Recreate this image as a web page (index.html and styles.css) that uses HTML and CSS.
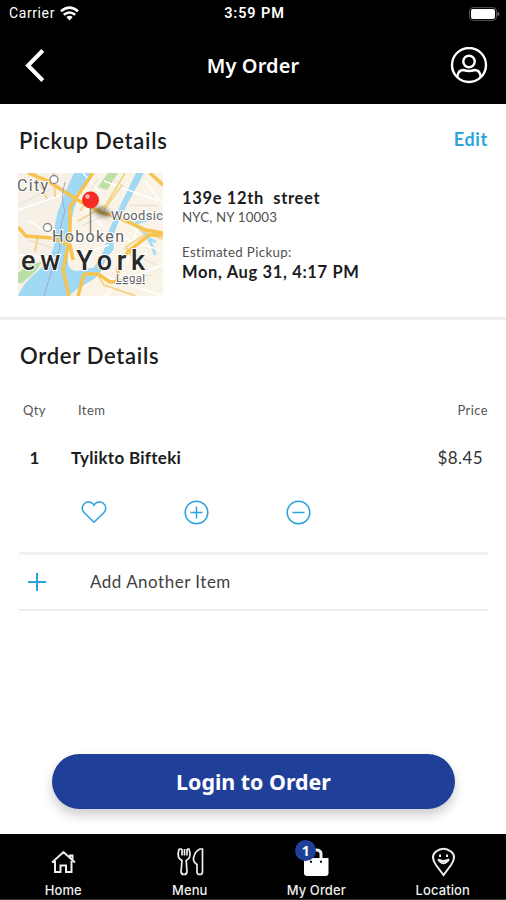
FILE: index.html
```html
<!DOCTYPE html>
<html lang="en">
<head>
<meta charset="utf-8">
<title>My Order</title>
<link rel="stylesheet" href="styles.css">
</head>
<body>
<div class="app">
  <header class="top">
    <div class="status">
      <div class="carrier"><span>Carrier</span>
        <svg width="19" height="15" viewBox="0 0 19 15" fill="none" stroke="#fff" stroke-width="2.600"><path d="M1 5.200Q9.500-1.800 18 5.200M3.800 8.800Q9.500 4.200 15.200 8.800"/><path d="M6.300 11Q9.500 8.400 12.700 11L9.500 14.400Z" fill="#fff" stroke="none"/></svg>
      </div>
      <span class="clock">3:59 PM</span>
      <svg class="battery" width="32" height="14" viewBox="0 0 32 14"><rect x="1.500" y=".6" width="27" height="12.800" rx="3.500" fill="none" stroke="#555"/><rect x="3" y="2" width="24" height="10" rx="2" fill="#fff"/><path d="M29.500 4.800Q31.500 5.500 31.500 7T29.500 9.200Z" fill="#777"/></svg>
    </div>
    <div class="nav">
      <svg width="22" height="34" viewBox="0 0 22 34" fill="none" stroke="#fff" stroke-width="4"><path d="M19.800 1.500L5 16.500L19.800 31.500"/></svg>
      <h1>My Order</h1>
      <svg width="38" height="38" viewBox="0 0 38 38" fill="none" stroke="#fff" stroke-width="2.400"><circle cx="19" cy="18" r="17"/><circle cx="19" cy="14.500" r="5.700"/><path d="M7.500 30V28.500Q8.500 23 13.500 23Q19 25 24.500 23Q29.500 23 30.500 28.500V30"/></svg>
    </div>
  </header>

  <section class="pickup">
    <div class="heading"><h2>Pickup Details</h2><a class="edit">Edit</a></div>
    <div class="pickup-body">
      <svg class="map" width="145" height="123" viewBox="0 0 145 123">
        <defs><filter id="soft" x="-50%" y="-50%" width="200%" height="200%"><feGaussianBlur stdDeviation="2.500"/></filter></defs>
        <rect width="145" height="123" fill="#f6f0e6"/>
        <path d="M52 0H145V123H62L50 90L51 34Z" fill="#faf4e8"/>
        <path d="M90 0H100L89 17L80 14Z" fill="#bddfa5"/>
        <path d="M0 100L12 91L24 89L18 98L4 110L0 110Z" fill="#b9dfa8"/>
        <path d="M56 0H74Q60 21 56 36Q51 54 50 83Q48 99 60 98L78 94Q85 99 76 106L59 116L51 123H0Q4 111 20 98Q35 85 37 67Q35 51 42 33Q49 14 56 0Z" fill="#9fd9f3"/>
        <path d="M118 0H126L112 26L100 50L95 64L96 76L88 86L82 100L74 98L86 77L91 57L101 35Z" fill="#9fd9f3"/>
        <path d="M99 42Q121 52 128 62T137 82M117 50L145 43M128 64L138 69" fill="none" stroke="#a9dcf3" stroke-width="3"/>
        <g fill="none" stroke="#fff" stroke-width="1.500"><path d="M0 37L43 22M0 82L38 85M10 47L37 65M57 67L82 58M60 82L91 72M69 42L85 53M86 8L140 28M101 64L145 78M119 56L109 90M80 101L145 123M106 100L88 123M127 8L145 32M145 92L112 105M65 0L83 21"/></g>
        <g fill="none" stroke="#e8ddd0" stroke-width="1"><path d="M0 32L38 14M10 67L34 75M65 52L84 44M67 65L84 67M60 87L73 78M80 5L74 15M93 5L107 14M111 32L140 33M104 75L138 92M95 108L135 102"/></g>
        <g fill="none" stroke="#f3d58b" stroke-width="2"><path d="M17 0L29 26M36 0L37 24M60 48L88 32L107 0M62 38L75 18M104 12L86 37M122 57L145 66M126 62L108 74L119 92M79 101L86 112L118 123M20 63L17 79"/></g>
        <g fill="none" stroke="#f6c34f" stroke-width="3.500"><path d="M10 0L30 8L58 26L82 39L99 44L128 57L145 60M75 0L60 22L52 34L52 61L48 84L45 97L51 123M0 54L8 63L34 65L52 72L55 87M145 62L131 62L113 76L101 89L99 108M66 101H80L92 109L110 108M66 101L60 123M132 0L145 12"/></g>
        <path d="M47 9Q42 27 47 38Q39 62 42 75Q35 93 26 123" fill="none" stroke="#a6a5cb" stroke-width="1"/>
        <g fill="#fff" stroke="#8a8a8a" stroke-width="1.300"><circle cx="36" cy="6.500" r="4"/><circle cx="29.500" cy="54.500" r="4"/></g>
        <g class="map-label">
          <text x="-1" y="18" font-size="16" textLength="31">City</text>
          <text x="93" y="47" font-size="13" textLength="52">Woodsic</text>
          <text x="34" y="69" font-size="16" textLength="72">Hoboken</text>
          <text class="legal" x="98" y="109" font-size="11.500" textLength="29">Legal</text>
        </g>
        <text class="map-city" x="3" y="97" font-size="27" textLength="124">ew York</text>
        <ellipse cx="84" cy="39" rx="9" ry="4" fill="#333" opacity=".6" filter="url(#soft)" transform="rotate(20 84 39)"/>
        <path d="M72.500 34V60" stroke="#888" stroke-width="1.500"/>
        <circle cx="72.500" cy="27" r="8.500" fill="#f52b24"/><circle cx="69.500" cy="23.500" r="2.300" fill="#ffb4ac"/>
      </svg>
      <div class="address">
        <strong class="street">139e 12th&nbsp; street</strong>
        <span class="city">NYC, NY 10003</span>
        <span class="estimate">Estimated Pickup:</span>
        <strong class="time">Mon, Aug 31, 4:17 PM</strong>
      </div>
    </div>
  </section>

  <section class="order">
    <h2>Order Details</h2>
    <div class="row labels"><span class="qty">Qty</span><span class="item">Item</span><span class="price">Price</span></div>
    <div class="row product"><span class="qty">1</span><span class="item">Tylikto Bifteki</span><span class="price">$8.45</span></div>
    <div class="actions">
      <svg width="26" height="26" viewBox="0 0 26 26"><path d="M13 23.200L3 13.500C-1.500 8 4 1.500 9.500 3.200Q12 4 13 6.200Q14 4 16.500 3.200C22 1.500 27.500 8 23 13.500Z"/></svg>
      <svg width="26" height="26" viewBox="0 0 26 26"><circle cx="13.500" cy="13.500" r="11.300"/><path d="M13.500 7.500V19.500M7.500 13.500H19.500"/></svg>
      <svg width="26" height="26" viewBox="0 0 26 26"><circle cx="13.500" cy="13.500" r="11.300"/><path d="M7.500 13.500H19.500"/></svg>
    </div>
    <div class="add">
      <svg width="20" height="20" viewBox="0 0 20 20"><path d="M10 1V19M1 10H19"/></svg>
      <span>Add Another Item</span>
    </div>
  </section>

  <button class="login"><span>Login to Order</span></button>

  <nav class="tabs">
    <a><svg width="30" height="32" viewBox="0 0 30 32"><path d="M4 16.500L15.500 6L27 16.500M7 15V26H12.500V19.500H18V26H23.500V15M22 11.500V9.500H24.500V13.500"/></svg><span>Home</span></a>
    <a><svg width="30" height="32" viewBox="0 0 30 32"><path d="M4 3Q2.500 8 3.500 11Q4.500 13 7 14.500L6 26Q6.500 28.500 9 28.500T12 26L11.200 14.500Q14 13 14.800 10.500Q15.500 7 14 3H12M7 3V9.500M9.500 3V9.500M12 3V9.500M4 3H7M27.500 3V26Q27.500 28.500 25 28.500Q22 28.500 22 26V18.500Q18 16 18.500 12Q20 5 25 3Z"/></svg><span>Menu</span></a>
    <a><span class="bag"><svg width="30" height="32" viewBox="0 0 30 32"><path class="solid" d="M3 12H27.500V27Q27.500 30 24.500 30H6Q3 30 3 27Z"/><path d="M10 13V8Q10 4 15 4T20 8V13" stroke-width="3"/><path class="dots" d="M10 15.500V16M20 15.500V16"/></svg><span class="badge">1</span></span><span>My Order</span></a>
    <a><svg width="30" height="32" viewBox="0 0 30 32"><path d="M15.500 29L8 19Q2 10.500 8 5.500Q15.500 0 23 5.500Q29 10.500 23 19ZM10 13.500Q15.500 21 21 13.500Q15.500 16.500 10 13.500"/><path d="M12 8.500V11M19 8.500V11"/></svg><span>Location</span></a>
  </nav>
</div>
</body>
</html>
```

FILE: styles.css
```css
* { box-sizing: border-box; }
body { margin: 0; background: #fff; font-family: Lato, "Noto Sans", sans-serif; color: #1b1c20; }
svg { display: block; flex: none; }
h1, h2 { margin: 0; }
.app { width: 506px; height: 900px; display: flex; flex-direction: column; overflow: hidden; }

.top { height: 104px; flex: none; background: #000; color: #fff; }
.status { height: 27px; padding: 0 6px 0 9px; display: grid; grid-template-columns: 1fr auto 1fr; align-items: center; font: 14px/27px Roboto, sans-serif; }
.carrier { display: flex; align-items: center; gap: 5px; letter-spacing: .6px; }
.clock { font-family: Roboto, sans-serif; font-weight: 600; font-size: 14.500px; letter-spacing: .9px; }
.battery { justify-self: end; }
.nav { height: 77px; padding: 0 18px 0 23px; display: grid; grid-template-columns: 1fr auto 1fr; align-items: center; }
.nav h1 { margin-right: 5px; font: 600 20px/28px "Noto Sans", sans-serif; letter-spacing: .1px; }
.nav svg:last-child { justify-self: end; }

.pickup { height: 216px; flex: none; padding: 22px 18px 0; border-bottom: 3px solid #eee; }
h2 { font: 600 22px/30px Lato, sans-serif; letter-spacing: .7px; }
.heading { height: 47px; display: flex; justify-content: space-between; padding-left: 1px; }
.edit { color: #2ba4da; font: 700 18px/26px Lato, sans-serif; letter-spacing: .7px; }
.pickup-body { display: flex; gap: 19px; }
.map text { font-family: Roboto, sans-serif; }
.map-label { fill: #626262; stroke: #fff; stroke-width: 2px; paint-order: stroke; }
.map-label .legal { text-decoration: underline; }
.map-city { fill: #292929; stroke: #fff; stroke-width: 2px; paint-order: stroke; font-weight: 500; }
.address { display: flex; flex-direction: column; padding-top: 15px; white-space: nowrap; }
.street, .time { font-size: 16.500px; line-height: 20px; font-weight: 700; letter-spacing: .65px; }
.city, .estimate { font-size: 13.300px; line-height: 18px; color: #505050; letter-spacing: .15px; }
.estimate { margin-top: 17px; letter-spacing: .35px; }
.time { margin-top: 1px; }

.order { padding: 21px 18px 0 19px; }
.order h2 { padding-left: 1px; }
.row { display: grid; grid-template-columns: 31px 1fr auto; }
.row .qty { text-align: center; }
.labels { margin-top: 29px; font-size: 13px; line-height: 20px; color: #555; letter-spacing: .4px; }
.labels .item { padding-left: 28px; }
.product { margin-top: 27px; font-size: 17px; line-height: 22px; font-weight: 700; }
.product .item { padding-left: 21px; letter-spacing: .3px; }
.product .price { padding-right: 5px; font-weight: 400; color: #333; letter-spacing: .4px; }
.actions { display: flex; gap: 76px; margin-top: 30px; padding-left: 62px; }
.actions svg, .add svg { fill: none; stroke: #29a2dd; stroke-width: 1.500; }
.add svg { stroke-width: 2; }
.add { height: 59px; display: flex; align-items: center; gap: 43px; margin-top: 27px; padding: 0 0 1px 8px; border-top: 3px solid #f2f2f2; border-bottom: 2px solid #ededed; font-size: 17px; color: #414141; letter-spacing: .5px; }

.login { width: 403px; height: 55px; flex: none; margin: auto auto 25px 52px; padding: 0; border: 0; border-radius: 28px; background: #203f99; color: #fff; box-shadow: 0 6px 12px #0003; font: 700 21.400px/55px "Noto Sans", sans-serif; }

.tabs { height: 66px; flex: none; background: #000; color: #eee; display: grid; grid-template-columns: repeat(4, 1fr); border-bottom: 1px solid #333; }
.tabs a { display: flex; flex-direction: column; align-items: center; padding-top: 12px; font: 500 13px/20px Inter, sans-serif; }
.tabs a > span:last-child { margin-top: 2px; white-space: nowrap; letter-spacing: .1px; }
.tabs svg { fill: none; stroke: #eee; stroke-width: 2; }
.tabs a:nth-child(2) svg { stroke-width: 1.700; }
.tabs .solid { fill: #fff; stroke: none; }
.tabs .dots { stroke: #000; stroke-linecap: round; }
.bag { position: relative; }
.badge { position: absolute; left: -6px; top: -6px; width: 21px; height: 21px; border-radius: 50%; background: #203f99; color: #fff; text-align: center; font: 700 14px/21px "Noto Sans", sans-serif; }
```
